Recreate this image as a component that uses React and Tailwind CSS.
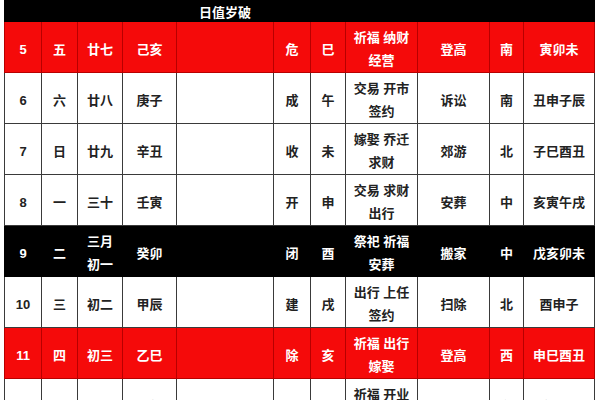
import React from 'react';

// column widths taken from the reference (px, borders included)
const cols = 'grid-cols-[38px_36px_45px_54px_97px_37px_35px_72px_72px_34px_71px]';

const rows = [
  { tone: 'black', h: 'h-[22px]', cells: ['', '', '', '', '日值岁破', '', '', '', '', '', ''] },
  { tone: 'red', cells: ['5', '五', '廿七', '己亥', '', '危', '巳', ['祈福 纳财', '经营'], '登高', '南', '寅卯未'] },
  { tone: 'white', cells: ['6', '六', '廿八', '庚子', '', '成', '午', ['交易 开市', '签约'], '诉讼', '南', '丑申子辰'] },
  { tone: 'white', cells: ['7', '日', '廿九', '辛丑', '', '收', '未', ['嫁娶 乔迁', '求财'], '郊游', '北', '子巳酉丑'] },
  { tone: 'white', cells: ['8', '一', '三十', '壬寅', '', '开', '申', ['交易 求财', '出行'], '安葬', '中', '亥寅午戌'] },
  { tone: 'black', cells: ['9', '二', ['三月', '初一'], '癸卯', '', '闭', '酉', ['祭祀 祈福', '安葬'], '搬家', '中', '戊亥卯未'] },
  { tone: 'white', cells: ['10', '三', '初二', '甲辰', '', '建', '戌', ['出行 上任', '签约'], '扫除', '北', '酉申子'] },
  { tone: 'red', cells: ['11', '四', '初三', '乙巳', '', '除', '亥', ['祈福 出行', '嫁娶'], '登高', '西', '申巳酉丑'] },
  { tone: 'white', cells: ['12', '五', '初四', '丙午', '', '满', '子', ['祈福 开业', '动土'], '诉讼', '东', '亥卯未'] },
];

const toneCls = {
  red: 'bg-[#f50a0a] text-white border-[#b80000]',
  black: 'bg-black text-white border-black',
  white: 'bg-white text-[#222] border-[#3a3a3a]',
};

function Cell({ value, tone, first, h }) {
  const lines = Array.isArray(value) ? value : [value];
  return (
    <div
      className={`${toneCls[tone]} ${h || 'h-[51px]'} border-r border-b ${first ? 'border-l' : ''} flex flex-col items-center justify-center pt-1 leading-[23px] text-[13px] font-bold whitespace-nowrap`}
    >
      {lines.map((l, i) => (
        <span key={i}>{l}</span>
      ))}
    </div>
  );
}

export default function App() {
  return (
    <div className="w-[600px] h-[400px] overflow-hidden bg-white pl-[4px] font-['Liberation_Sans','Noto_Sans_CJK_SC',sans-serif]">
      {rows.map((r, ri) => (
        <div key={ri} className={`grid ${cols}`}>
          {r.cells.map((c, ci) => (
            <Cell key={ci} value={c} tone={r.tone} first={ci === 0} h={r.h} />
          ))}
        </div>
      ))}
    </div>
  );
}
